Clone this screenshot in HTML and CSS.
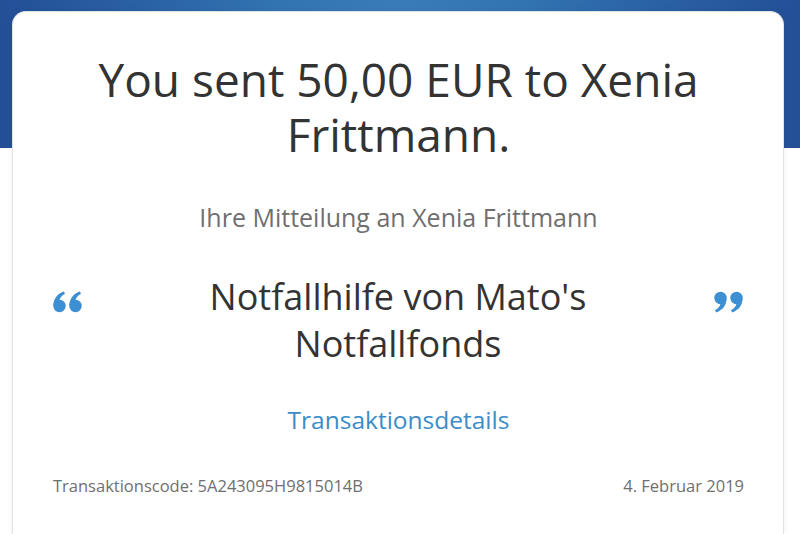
FILE: index.html
```html
<!DOCTYPE html>
<html lang="en">
<head>
  <meta charset="UTF-8">
  <title>Zahlung gesendet</title>
  <link rel="stylesheet" href="styles.css">
</head>
<body>

<div class="card">
  <h1 class="title">You sent 50,00 EUR to Xenia Frittmann.</h1>

  <p class="subtitle">Ihre Mitteilung an Xenia Frittmann</p>

  <div class="message">
    <svg class="quote" viewBox="0 0 30 22" width="30" height="22">
      <circle cx="6.5" cy="15" r="6.2"/>
      <path d="M0.4 15 C0.4 8 4 3 10.8 0.6 L12 2.8 C8 4.8 6.3 8 6.3 11 Z"/>
      <circle cx="22.5" cy="15" r="6.2"/>
      <path d="M16.4 15 C16.4 8 20 3 26.8 0.6 L28 2.8 C24 4.8 22.3 8 22.3 11 Z"/>
    </svg>
    <p class="message-text">Notfallhilfe von Mato's Notfallfonds</p>
    <svg class="quote" viewBox="0 0 30 22" width="30" height="22">
      <g transform="rotate(180 15 11)">
        <circle cx="6.5" cy="15" r="6.2"/>
        <path d="M0.4 15 C0.4 8 4 3 10.8 0.6 L12 2.8 C8 4.8 6.3 8 6.3 11 Z"/>
        <circle cx="22.5" cy="15" r="6.2"/>
        <path d="M16.4 15 C16.4 8 20 3 26.8 0.6 L28 2.8 C24 4.8 22.3 8 22.3 11 Z"/>
      </g>
    </svg>
  </div>

  <a class="details-link" href="#">Transaktionsdetails</a>

  <div class="footer">
    <span>Transaktionscode: 5A243095H9815014B</span>
    <span>4. Februar 2019</span>
  </div>
</div>

</body>
</html>
```

FILE: styles.css
```css
html, body {
  height: 100%;
}

body {
  margin: 0;
  font-family: "Open Sans", "Noto Sans", Arial, sans-serif;
  background:
    linear-gradient(90deg, #234f97 0%, #3274b2 35%, #3a7cb9 50%, #3274b2 65%, #234f97 100%) no-repeat top left / 100% 148px,
    #ffffff;
  overflow: hidden;
}

.card {
  box-sizing: border-box;
  height: calc(100% - 11px);
  margin: 11px 16px 0 12px;
  padding: 40px 39px 0 40px;
  background: white;
  border-radius: 14px 14px 0 0;
  border: 1px solid #e2e2e2;
  border-bottom: none;
  box-shadow: 0 0 6px rgba(0,0,0,0.06);
  text-align: center;
}

.title {
  margin: 0;
  font-size: 46px;
  line-height: 55px;
  font-weight: 400;
  color: #333333;
}

.subtitle {
  margin: 39px 0 0;
  font-size: 25px;
  line-height: 32px;
  color: #6f6f6f;
}

.message {
  display: flex;
  align-items: flex-start;
  margin-top: 40px;
}

.quote {
  flex: none;
  margin-top: 18px;
  fill: #3d8fd4;
}

.message .quote:last-child {
  margin-right: 1px;
}

.message-text {
  flex: 1;
  margin: 0 auto;
  max-width: 420px;
  font-size: 36px;
  line-height: 47px;
  color: #333333;
}

.details-link {
  display: block;
  margin-top: 37px;
  font-size: 24.5px;
  line-height: 32px;
  color: #3c8cc9;
  text-decoration: none;
}

.footer {
  display: flex;
  justify-content: space-between;
  margin-top: 39px;
  font-size: 16.5px;
  line-height: 22px;
  color: #6f6f6f;
}
```
